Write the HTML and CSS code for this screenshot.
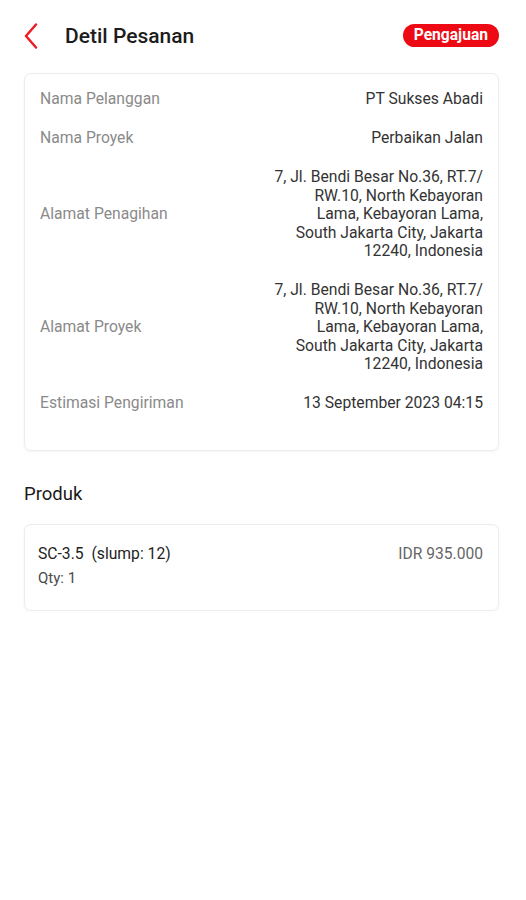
FILE: index.html
```html
<!DOCTYPE html>
<html>
  <head>
    <meta name="viewport" content="width=device-width, initial-scale=1.0">
    <title>Detil Pesanan</title>
    <link rel="stylesheet" href="styles.css">
  </head>
  <body>
    <div id="page">
      <div id="top-bar">
        <button id="back-btn" aria-label="Kembali">
          <svg width="18" height="26" viewBox="0 0 18 26">
            <polyline points="14,1.5 4,13 14,24.5" fill="none" stroke="#ee1c25" stroke-width="2.5" stroke-linecap="round" stroke-linejoin="round" />
          </svg>
        </button>
        <h1 id="title">Detil Pesanan</h1>
        <span id="status-badge">Pengajuan</span>
      </div>

      <div class="card detail-card">
        <div class="detail-row">
          <span class="label">Nama Pelanggan</span>
          <span class="value">PT Sukses Abadi</span>
        </div>
        <div class="detail-row">
          <span class="label">Nama Proyek</span>
          <span class="value">Perbaikan Jalan</span>
        </div>
        <div class="detail-row">
          <span class="label">Alamat Penagihan</span>
          <span class="value address">7, Jl. Bendi Besar No.36, RT.7/ RW.10, North Kebayoran Lama, Kebayoran Lama, South Jakarta City, Jakarta 12240, Indonesia</span>
        </div>
        <div class="detail-row">
          <span class="label">Alamat Proyek</span>
          <span class="value address">7, Jl. Bendi Besar No.36, RT.7/ RW.10, North Kebayoran Lama, Kebayoran Lama, South Jakarta City, Jakarta 12240, Indonesia</span>
        </div>
        <div class="detail-row">
          <span class="label">Estimasi Pengiriman</span>
          <span class="value">13 September 2023 04:15</span>
        </div>
      </div>

      <h2 id="section-title">Produk</h2>

      <div class="card product-card">
        <div class="product-info">
          <div class="product-name">SC-3.5&nbsp; (slump: 12)</div>
          <div class="product-qty">Qty: 1</div>
        </div>
        <div class="product-price">IDR 935.000</div>
      </div>
    </div>
  </body>
</html>
```

FILE: styles.css
```css
body {
  margin: 0;
  font-family: Roboto, "Noto Sans", sans-serif;
  background-color: #ffffff;
  color: #222222;
}

#page {
  padding: 0 27px 0 24px;
}

#top-bar {
  display: flex;
  align-items: center;
  height: 71px;
  margin-bottom: 2px;
}

#back-btn {
  background: none;
  border: none;
  padding: 0;
  margin-left: -2px;
  width: 20px;
  height: 26px;
  cursor: pointer;
  display: flex;
  align-items: center;
}

#title {
  margin: 0 0 0 23px;
  font-size: 21px;
  font-weight: 500;
  color: #1c1c1c;
}

#status-badge {
  margin-left: auto;
  background-color: #ee0a14;
  color: white;
  font-size: 15.6px;
  font-weight: 700;
  line-height: 23px;
  padding: 0 11px;
  border-radius: 12px;
}

.card {
  border: 1px solid #ececec;
  border-radius: 7px;
  box-shadow: 0px 1px 3px rgba(0, 0, 0, 0.05);
}

.detail-card {
  padding: 16px 15px 37px 15px;
  display: flex;
  flex-direction: column;
  gap: 20.5px;
}

.detail-row {
  display: flex;
  justify-content: space-between;
  align-items: center;
  font-size: 15.7px;
  line-height: 18.5px;
}

.label {
  color: #8a8a8a;
}

.value {
  color: #333333;
  text-align: right;
}

.address {
  width: 209px;
}

#section-title {
  margin: 32px 0 19px 0;
  font-size: 18.5px;
  font-weight: 400;
  color: #1a1a1a;
}

.product-card {
  display: flex;
  justify-content: space-between;
  align-items: flex-start;
  padding: 19px 15px 22px 13px;
}

.product-name {
  font-size: 15.7px;
  line-height: 20px;
  color: #1e1e1e;
}

.product-qty {
  margin-top: 4px;
  font-size: 15px;
  line-height: 20px;
  color: #4a4a4a;
}

.product-price {
  font-size: 15.6px;
  line-height: 20px;
  color: #666666;
}
```
